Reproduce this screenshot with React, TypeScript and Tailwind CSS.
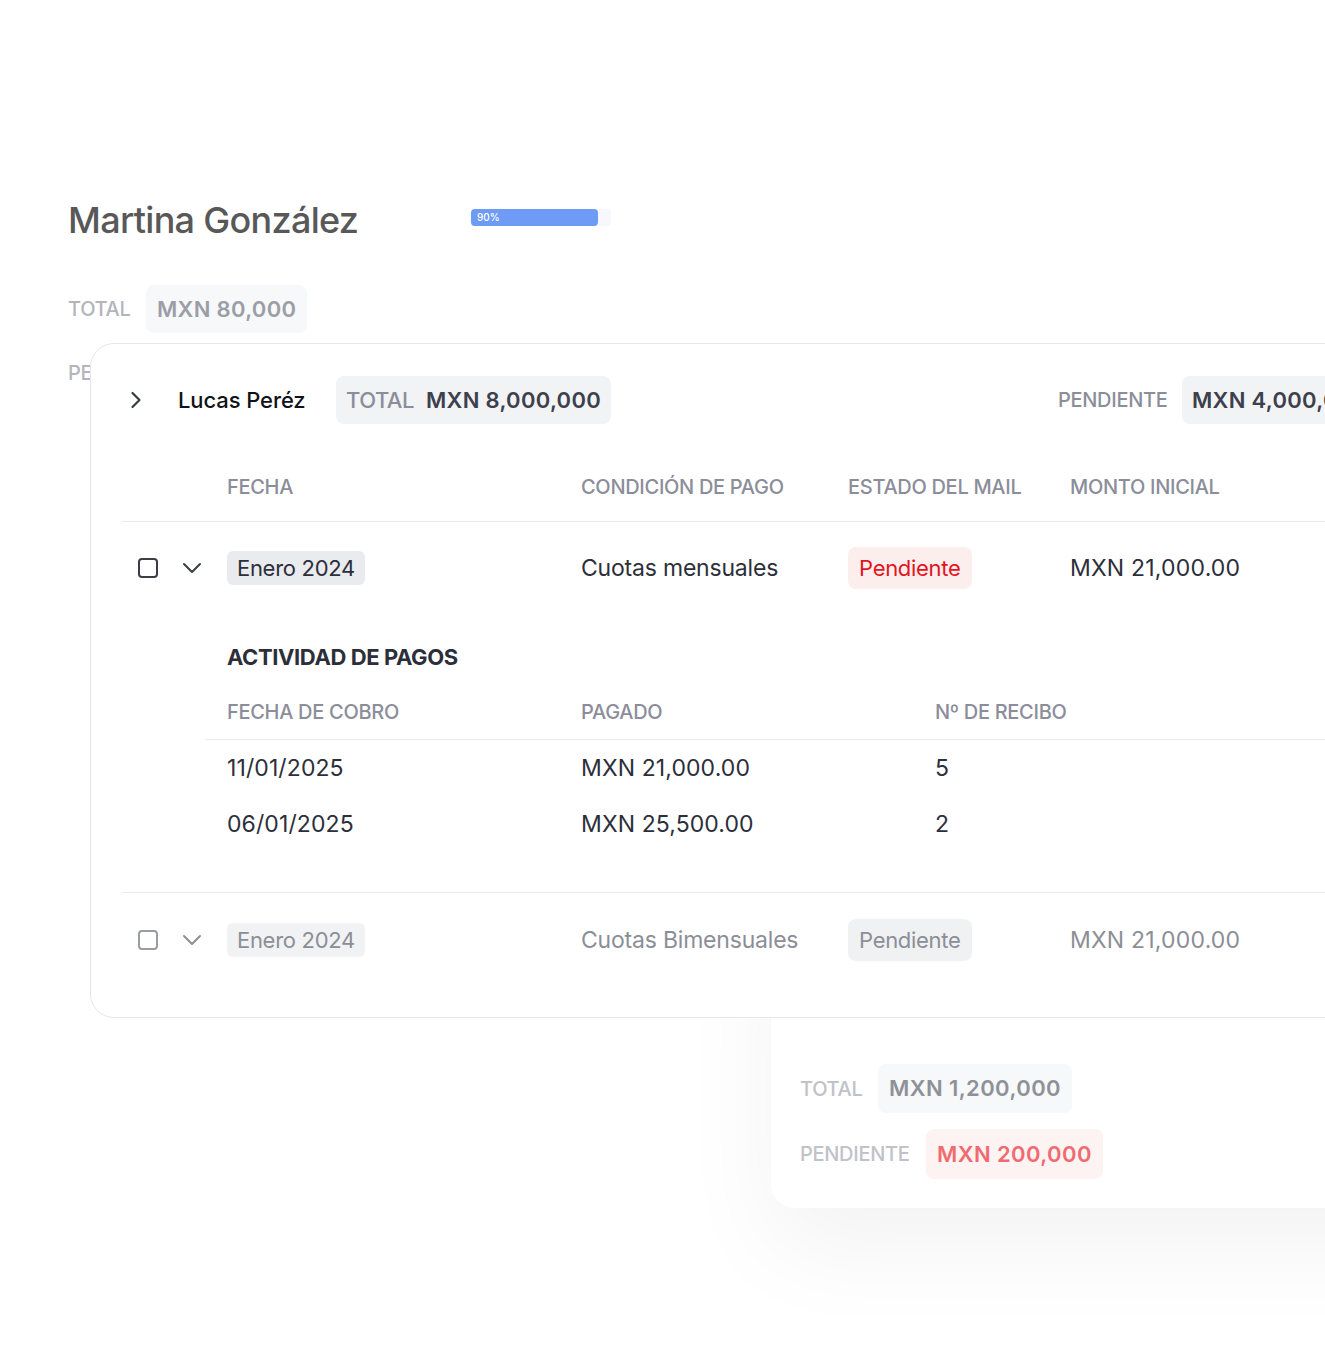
import type { ReactNode } from "react";

const font = "font-['Inter','Noto_Sans',sans-serif]";

function ChevronRight() {
  return (
    <svg width="12" height="18" viewBox="0 0 12 18" fill="none">
      <polyline
        points="2.5,2 9.5,9 2.5,16"
        stroke="#3a3c44"
        strokeWidth="2.2"
        strokeLinecap="round"
        strokeLinejoin="round"
      />
    </svg>
  );
}

function ChevronDown({ color }: { color: string }) {
  return (
    <svg width="20" height="12" viewBox="0 0 20 12" fill="none">
      <polyline
        points="2,2 10,10 18,2"
        stroke={color}
        strokeWidth="2"
        strokeLinecap="round"
        strokeLinejoin="round"
      />
    </svg>
  );
}

function Checkbox({ faded }: { faded?: boolean }) {
  return (
    <span
      className={
        faded
          ? "block h-[20px] w-[20px] rounded-[4px] border-2 border-[#9a9ca3]"
          : "block h-[20px] w-[20px] rounded-[4px] border-2 border-[#3b3d44]"
      }
    />
  );
}

function HeadCell({ children }: { children: ReactNode }) {
  return (
    <div className="text-[20px] leading-[24px] font-medium tracking-[-0.3px] text-[#8b8d9a] uppercase">
      {children}
    </div>
  );
}

function Row({ faded }: { faded?: boolean }) {
  const text = faded ? "text-[#8c8e97]" : "text-[#2c2f3a]";
  return (
    <div className="grid grid-cols-[105px_354px_267px_222px_1fr] items-center">
      <div className="flex items-center">
        <span className="ml-[16px]">
          <Checkbox faded={faded} />
        </span>
        <span className="ml-[24px]">
          <ChevronDown color={faded ? "#8c8e97" : "#3a3c44"} />
        </span>
      </div>
      <div>
        <span
          className={
            faded
              ? "inline-block rounded-[6px] bg-[#f1f2f4] px-[10px] py-[3px] text-[22px] leading-[28px] tracking-[-0.3px] text-[#8c8e97]"
              : "inline-block rounded-[6px] bg-[#e9ebee] px-[10px] py-[3px] text-[22px] leading-[28px] tracking-[-0.3px] text-[#2c2f3a]"
          }
        >
          Enero 2024
        </span>
      </div>
      <div className={`text-[23px] leading-[30px] tracking-[-0.2px] ${text}`}>
        {faded ? "Cuotas Bimensuales" : "Cuotas mensuales"}
      </div>
      <div>
        <span
          className={
            faded
              ? "inline-block rounded-[8px] bg-[#eff1f3] px-[11px] py-[6px] text-[22px] leading-[30px] tracking-[-0.3px] text-[#8c8e97]"
              : "inline-block rounded-[8px] bg-[#fdeeee] px-[11px] py-[6px] text-[22px] leading-[30px] tracking-[-0.3px] text-[#e3151d]"
          }
        >
          Pendiente
        </span>
      </div>
      <div className={`text-[23px] leading-[30px] tracking-[0.2px] ${text}`}>
        MXN 21,000.00
      </div>
    </div>
  );
}

const pagos = [
  { fecha: "11/01/2025", pagado: "MXN 21,000.00", recibo: "5" },
  { fecha: "06/01/2025", pagado: "MXN 25,500.00", recibo: "2" },
];

export default function App() {
  return (
    <div className={`relative h-[1360px] w-[1325px] overflow-hidden bg-white ${font}`}>
      {/* tarjeta del fondo */}
      <div className="px-[68px] pt-[198px]">
        <div className="flex items-center">
          <h1 className="w-[403px] text-[36px] leading-[44px] font-medium tracking-[-0.7px] text-[#585858]">
            Martina González
          </h1>
          <div className="-mt-[5px] h-[17px] w-[140px] rounded-[4px] bg-[#f7f8fb]">
            <div className="flex h-[17px] w-[127px] items-center rounded-[4px] bg-[#6d9bf6] pl-[6px] text-[10px] font-medium text-white">
              90%
            </div>
          </div>
        </div>
        <div className="mt-[43px] flex items-center gap-[15px]">
          <span className="w-[63px] text-[20px] font-medium tracking-[-0.3px] text-[#b3b5bc]">
            TOTAL
          </span>
          <span className="rounded-[8px] bg-[#f7f8f9] px-[11px] py-[10px] text-[22px] leading-[28px] font-semibold tracking-[0.3px] text-[#9b9ea6]">
            MXN 80,000
          </span>
        </div>
        <div className="mt-[26px] flex items-center gap-[15px]">
          <span className="text-[20px] leading-[28px] font-medium tracking-[-0.3px] text-[#b3b5bc]">
            PENDIENTE
          </span>
        </div>
      </div>

      {/* tarjeta inferior */}
      <div className="absolute top-[900px] left-[771px] w-[700px] rounded-[24px] bg-white px-[29px] pt-[164px] pb-[29px] shadow-[0_40px_100px_rgba(0,0,0,0.05)]">
        <div className="flex items-center gap-[16px]">
          <span className="w-[62px] text-[20px] font-medium tracking-[-0.3px] text-[#c0c2c8]">TOTAL</span>
          <span className="rounded-[8px] bg-[#f6f8f9] px-[11px] py-[10px] text-[22px] leading-[29px] font-semibold tracking-[0.4px] text-[#8f9198]">
            MXN 1,200,000
          </span>
        </div>
        <div className="mt-[16px] flex items-center gap-[15px]">
          <span className="w-[111px] text-[20px] font-medium tracking-[-0.3px] text-[#c0c2c8]">
            PENDIENTE
          </span>
          <span className="rounded-[8px] bg-[#fdf3f3] px-[11px] py-[10px] text-[22px] leading-[30px] font-semibold tracking-[0.4px] text-[#ef6b70]">
            MXN 200,000
          </span>
        </div>
      </div>

      {/* tarjeta principal */}
      <div className="absolute top-[343px] left-[90px] w-[1300px] rounded-[24px] border border-[#e6e7ea] bg-white pt-[32px] pb-[56px]">
        <div className="flex items-center">
          <div className="flex w-[967px] items-center pl-[39px]">
            <span className="w-[48px]">
              <ChevronRight />
            </span>
            <span className="w-[158px] text-[22px] font-medium tracking-[-0.1px] text-[#111217]">
              Lucas Peréz
            </span>
            <span className="flex items-center gap-[12px] rounded-[8px] bg-[#f1f3f5] px-[10px] py-[10px] text-[22px] leading-[28px]">
              <span className="font-medium tracking-[-0.5px] text-[#8b8d9a]">TOTAL</span>
              <span className="font-semibold tracking-[0.3px] text-[#3d404c]">MXN 8,000,000</span>
            </span>
          </div>
          <span className="w-[124px] text-[20px] font-medium tracking-[-0.3px] text-[#8b8d9a]">
            PENDIENTE
          </span>
          <span className="rounded-[8px] bg-[#f1f3f5] px-[10px] py-[10px] text-[22px] leading-[28px] font-semibold tracking-[0.3px] text-[#3d404c]">
            MXN 4,000,000
          </span>
        </div>

        <div className="ml-[31px]">
          <div className="grid grid-cols-[105px_354px_267px_222px_1fr] border-b border-[#e9eaed] pt-[51px] pb-[22px]">
            <div />
            <HeadCell>Fecha</HeadCell>
            <HeadCell>Condición de pago</HeadCell>
            <HeadCell>Estado del mail</HeadCell>
            <HeadCell>Monto inicial</HeadCell>
          </div>

          <div className="border-b border-[#e9eaed] pt-[25px] pb-[40px]">
            <Row />
            <div className="mt-[54px] pl-[105px] text-[22px] leading-[28px] font-bold tracking-[-0.4px] text-[#2c2f3a]">
              ACTIVIDAD DE PAGOS
            </div>
            <div className="ml-[83px] mt-[29px]">
              <div className="grid grid-cols-[354px_354px_1fr] border-b border-[#e9eaed] pb-[15px] pl-[22px]">
                <HeadCell>Fecha de cobro</HeadCell>
                <HeadCell>Pagado</HeadCell>
                <HeadCell>Nº de recibo</HeadCell>
              </div>
              {pagos.map((p) => (
                <div
                  key={p.fecha}
                  className="grid h-[56px] grid-cols-[354px_354px_1fr] items-center pl-[22px] text-[23px] leading-[30px] tracking-[0.1px] text-[#2c2f3a]"
                >
                  <span>{p.fecha}</span>
                  <span>{p.pagado}</span>
                  <span>{p.recibo}</span>
                </div>
              ))}
            </div>
          </div>

          <div className="pt-[26px]">
            <Row faded />
          </div>
        </div>
      </div>
    </div>
  );
}
